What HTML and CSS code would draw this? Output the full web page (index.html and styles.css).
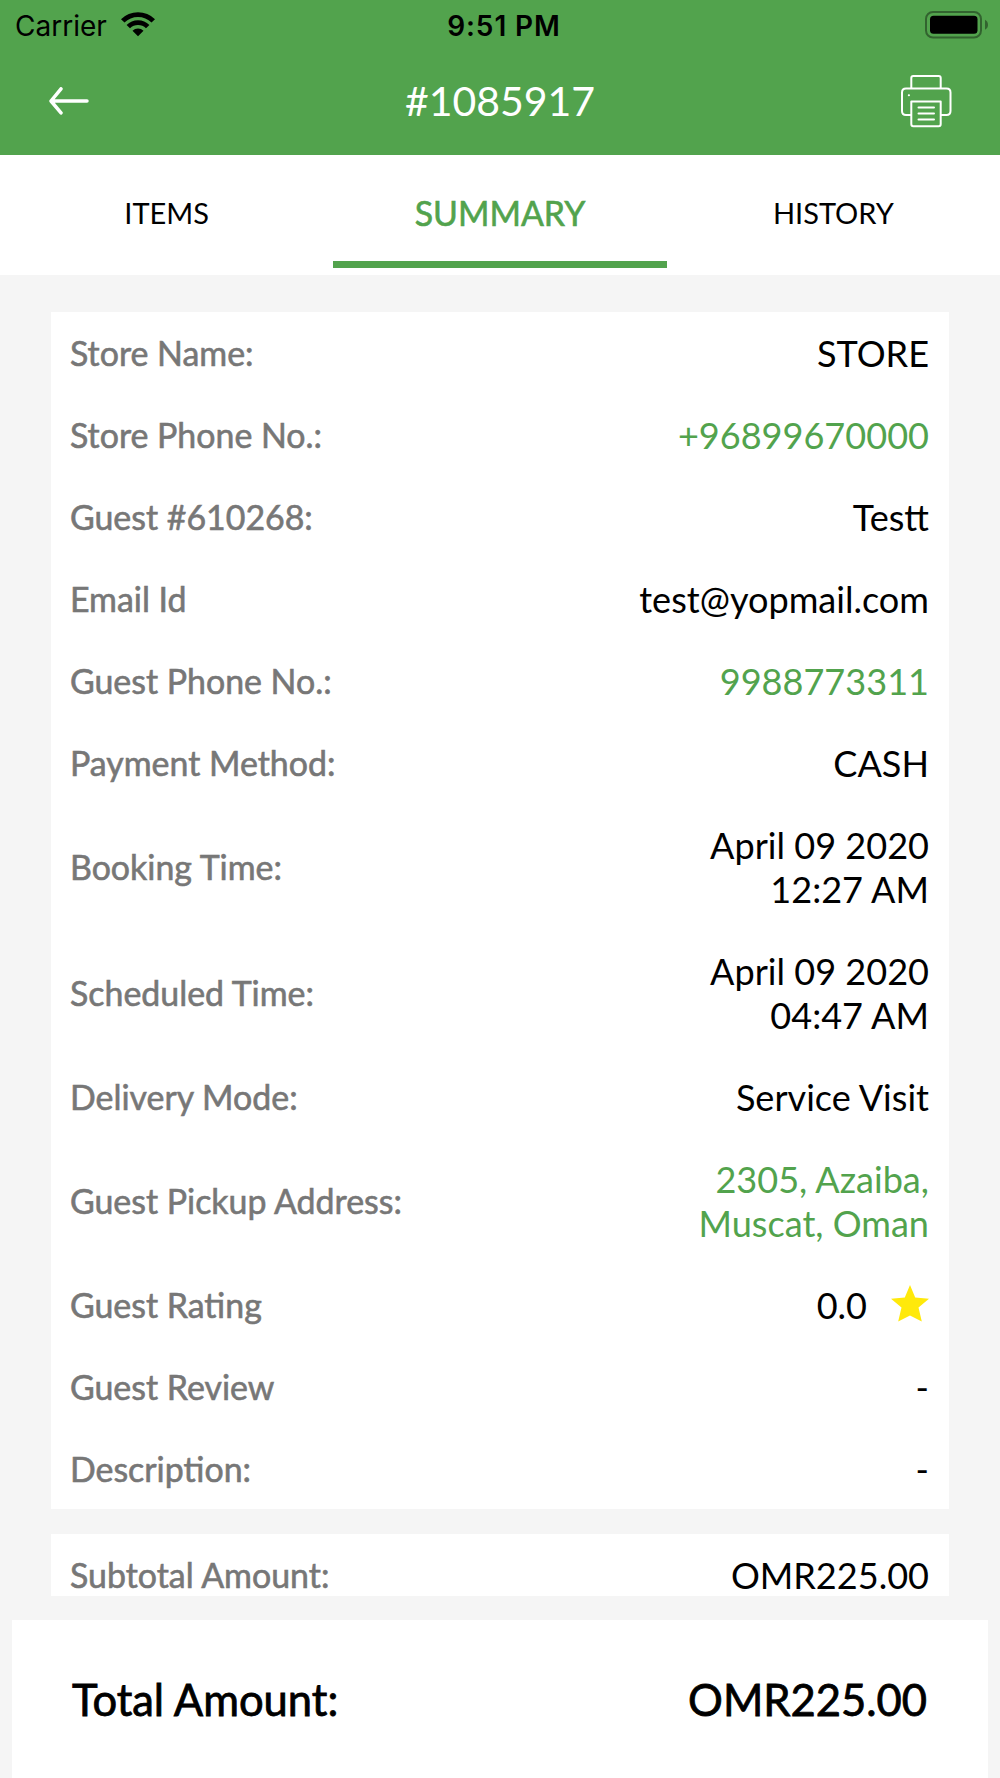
FILE: index.html
```html
<!DOCTYPE html>
<html lang="en">
<head>
<meta charset="utf-8">
<title>Order #1085917</title>
<link rel="stylesheet" href="styles.css">
</head>
<body>
<div class="screen">
  <div class="status">
    <div class="carrier"><span>Carrier</span>
      <svg class="wifi" width="34" height="25" viewBox="0 0 34 25"><path d="M0 7.200A24 24 0 0 1 34 7.200L30.500 10.600A19 19 0 0 0 3.500 10.600ZM5.600 13A16.200 16.200 0 0 1 28.400 13L25 16.300A11.500 11.500 0 0 0 9 16.300ZM11.500 18.800A8 8 0 0 1 22.500 18.800L17 24.200Z"/></svg>
    </div>
    <div class="clock">9:51 PM</div>
    <svg class="battery" width="64" height="28" viewBox="0 0 64 28"><rect class="shell" x="1" y="1" width="55" height="25.500" rx="7"/><rect x="5" y="4.800" width="47.500" height="18" rx="3.500"/><path class="nub" d="M60 8.800Q63 10.500 63 13.800T60 18.800z"/></svg>
  </div>
  <header class="bar">
    <svg class="back" width="42" height="28" viewBox="0 0 42 28"><path d="M39 14H3M13 1.800L3 14L13 25.800"/></svg>
    <h1>#1085917</h1>
    <svg class="printer" width="52" height="54" viewBox="0 0 52 54"><path d="M11.300 14.500V4Q11.300 2 13.300 2H38.700Q40.700 2 40.700 4V14.500M11.300 41H6Q2 41 2 37V18.500Q2 14.500 6 14.500H46.500Q50.500 14.500 50.500 18.500V37Q50.500 41 46.500 41H40.700M11.300 27.500H40.700V50Q40.700 52.200 38.700 52.200H13.300Q11.300 52.200 11.300 50ZM18.500 33.500H34M18.500 39.500H34M18.500 45.500H34M8.800 21.200H9"/></svg>
  </header>
  <nav class="tabs"><a>ITEMS</a><a class="active">SUMMARY</a><a>HISTORY</a></nav>
  <main class="content">
    <section class="card">
      <div class="row"><span class="label">Store Name:</span><span class="value">STORE</span></div>
      <div class="row"><span class="label">Store Phone No.:</span><span class="value link">+96899670000</span></div>
      <div class="row"><span class="label">Guest #610268:</span><span class="value">Testt</span></div>
      <div class="row"><span class="label">Email Id</span><span class="value">test@yopmail.com</span></div>
      <div class="row"><span class="label">Guest Phone No.:</span><span class="value link">9988773311</span></div>
      <div class="row"><span class="label">Payment Method:</span><span class="value">CASH</span></div>
      <div class="row"><span class="label">Booking Time:</span><span class="value">April 09 2020<br>12:27 AM</span></div>
      <div class="row"><span class="label">Scheduled Time:</span><span class="value">April 09 2020<br>04:47 AM</span></div>
      <div class="row"><span class="label">Delivery Mode:</span><span class="value">Service Visit</span></div>
      <div class="row"><span class="label">Guest Pickup Address:</span><span class="value link">2305, Azaiba,<br>Muscat, Oman</span></div>
      <div class="row"><span class="label">Guest Rating</span><span class="value rating">0.0<svg width="38" height="37" viewBox="0 0 38 37"><path d="M19 0L24.200 12.500L38 13.800L27.500 22.600L30.800 36.400L19 30.500L7.200 36.400L10.500 22.600L0 13.800L13.800 12.500Z"/></svg></span></div>
      <div class="row"><span class="label">Guest Review</span><span class="value">-</span></div>
      <div class="row"><span class="label">Description:</span><span class="value">-</span></div>
    </section>
    <section class="card amounts">
      <div class="row"><span class="label">Subtotal Amount:</span><span class="value">OMR225.00</span></div>
    </section>
  </main>
  <footer class="total"><span>Total Amount:</span><span>OMR225.00</span></footer>
</div>
</body>
</html>
```
FILE: styles.css
```css
* { box-sizing: border-box; }
body { margin: 0; background: #f5f5f5; font-family: Lato, sans-serif; color: #000; }
.screen { width: 1000px; height: 1778px; overflow: hidden; display: flex; flex-direction: column; }
.status { height: 50px; flex: none; background: #52a34d; display: grid; grid-template-columns: 1fr auto 1fr; align-items: center; padding: 0 11px 1px 15px; font: 28px Inter, sans-serif; }
.carrier { display: flex; align-items: center; gap: 14px; padding-top: 2px; }
.wifi { margin-top: -2px; }
.clock { font-weight: 600; letter-spacing: 0.9px; padding: 2px 0 0 4px; }
.battery { justify-self: end; }
.shell { fill: none; stroke: #32632f; stroke-width: 2; }
.nub { fill: #32632f; }
.bar { height: 105px; flex: none; background: #52a34d; display: grid; grid-template-columns: 1fr auto 1fr; align-items: center; padding: 0 48px 3px; }
.bar svg { fill: none; stroke: #fff; stroke-width: 2; stroke-linecap: round; stroke-linejoin: round; }
.bar .back { stroke-width: 3.500; }
.printer { justify-self: end; }
h1 { margin: -2px 0 0; color: #fff; font-weight: 400; font-size: 41px; }
.tabs { height: 120px; flex: none; background: #fff; display: grid; grid-template-columns: repeat(3, 1fr); padding-bottom: 7px; }
.tabs a { display: flex; align-items: center; justify-content: center; font-size: 29px; border-bottom: 7px solid transparent; padding-top: 9px; }
.tabs .active { color: #52a34d; -webkit-text-stroke: 0.6px; font-size: 33.900px; border-color: #52a34d; }
.content { height: 1321px; padding: 37px 51px 0; flex: none; overflow: hidden; }
.card { background: #fff; padding: 0 20px 0 19px; height: 1197px; }
.row { display: flex; justify-content: space-between; align-items: center; padding: 19px 0; }
.label { color: #777; -webkit-text-stroke: 0.6px; font-size: 33.900px; }
.value { font-size: 36.100px; line-height: 44px; text-align: right; }
.link { color: #52a34d; }
.rating { display: flex; align-items: center; gap: 24px; }
.rating svg { margin-top: -3px; }
.rating path { fill: #ffe90a; }
.amounts { height: 62px; margin-top: 25px; overflow: hidden; }
.total { margin: 24px 12px 0; flex: 1; background: #fff; display: flex; justify-content: space-between; align-items: center; padding: 0 61px 0 60px; font-size: 43.500px; -webkit-text-stroke: 0.8px; }
```
